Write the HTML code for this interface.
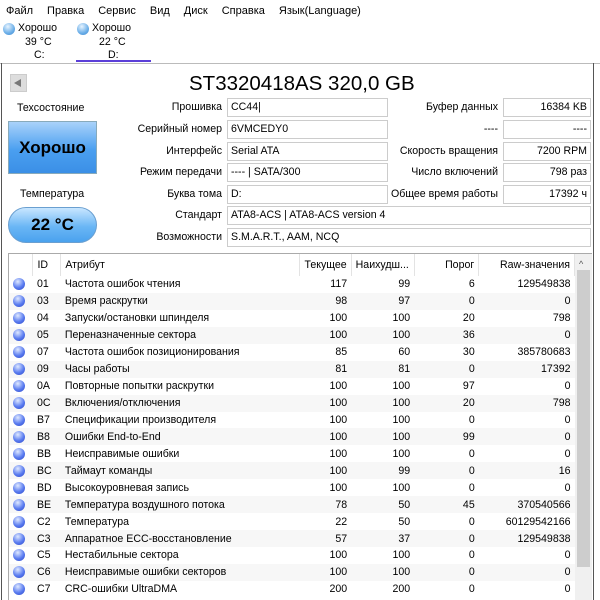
<!DOCTYPE html><html><head><meta charset="utf-8"><style>
*{margin:0;padding:0;box-sizing:border-box}
body{width:600px;height:600px;overflow:hidden;background:#fff;font-family:"Liberation Sans","DejaVu Sans",sans-serif;font-size:10.6px;color:#000;position:relative}
.a{position:absolute;white-space:nowrap}
.menu span{margin-right:14px;font-size:11px}
.lbl{position:absolute;text-align:right;white-space:nowrap}
.f{position:absolute;border:1px solid #ccc;height:19px;line-height:17px;padding:0 3px;background:#fff;white-space:nowrap}
.r{text-align:right}
.dot{position:absolute;width:12px;height:12px;border-radius:50%;background:radial-gradient(circle at 40% 30%,#dfe9ff,#5a7cf0 55%,#2a45c8)}
table{border-collapse:collapse;position:absolute;left:9px;top:254px;width:566px;font-size:10.6px}
td{height:16.95px;padding:0 4px;white-space:nowrap}
tr:nth-child(odd) td{background:#f7f7f7}
tr.h td{height:22px;background:#fff;border-right:1px solid #e3e3e3}
td.n{text-align:right}
</style></head><body>
<div class="a menu" style="left:6px;top:5px"><span>Файл</span><span>Правка</span><span>Сервис</span><span>Вид</span><span>Диск</span><span>Справка</span><span>Язык(Language)</span></div>
<div class="dot" style="left:3px;top:23px;background:radial-gradient(circle at 40% 30%,#e8f4ff,#6aaee8 60%,#3d86cf)"></div>
<div class="a" style="left:18px;top:22px">Хорошо</div>
<div class="a" style="left:25px;top:36px">39 °C</div>
<div class="a" style="left:34px;top:49px">C:</div>
<div class="dot" style="left:77px;top:23px;background:radial-gradient(circle at 40% 30%,#e8f4ff,#6aaee8 60%,#3d86cf)"></div>
<div class="a" style="left:92px;top:22px">Хорошо</div>
<div class="a" style="left:99px;top:36px">22 °C</div>
<div class="a" style="left:108px;top:49px">D:</div>
<div class="a" style="left:76px;top:60px;width:75px;height:2px;background:#5b3fd8"></div>
<div class="a" style="left:0;top:63px;width:600px;height:1px;background:#bbb"></div>
<div class="a" style="left:1px;top:63px;width:1px;height:537px;background:#555"></div>
<div class="a" style="left:593px;top:63px;width:1px;height:537px;background:#555"></div>
<div class="a" style="left:10px;top:74px;width:17px;height:18px;background:#ddd;border:1px solid #ccc"></div>
<div class="a" style="left:14px;top:79px;width:0;height:0;border-right:7px solid #777;border-top:4px solid transparent;border-bottom:4px solid transparent"></div>
<div class="a" style="left:189px;top:72px;font-size:20.5px">ST3320418AS 320,0 GB</div>
<div class="a" style="left:17px;top:102px">Техсостояние</div>
<div class="a" style="left:8px;top:121px;width:89px;height:53px;background:linear-gradient(#a9d2fa,#4a9ff0 55%,#3b8fe6);border:1px solid #8ab;text-align:center;line-height:51px;font-size:17px;font-weight:bold">Хорошо</div>
<div class="a" style="left:20px;top:188px">Температура</div>
<div class="a" style="left:8px;top:207px;width:89px;height:36px;border-radius:18px;background:linear-gradient(#c9e6ff,#6ab6f5 55%,#4aa2ee);border:1px solid #6a9fd0;text-align:center;line-height:34px;font-size:17px;font-weight:bold">22 °C</div>
<div class="lbl" style="right:378px;top:101px">Прошивка</div>
<div class="lbl" style="right:378px;top:123px">Серийный номер</div>
<div class="lbl" style="right:378px;top:145px">Интерфейс</div>
<div class="lbl" style="right:378px;top:166px">Режим передачи</div>
<div class="lbl" style="right:378px;top:188px">Буква тома</div>
<div class="lbl" style="right:378px;top:209px">Стандарт</div>
<div class="lbl" style="right:378px;top:231px">Возможности</div>
<div class="f" style="left:227px;top:98px;width:161px">CC44|</div>
<div class="f" style="left:227px;top:120px;width:161px">6VMCEDY0</div>
<div class="f" style="left:227px;top:142px;width:161px">Serial ATA</div>
<div class="f" style="left:227px;top:163px;width:161px">---- | SATA/300</div>
<div class="f" style="left:227px;top:185px;width:161px">D:</div>
<div class="f" style="left:227px;top:206px;width:364px">ATA8-ACS | ATA8-ACS version 4</div>
<div class="f" style="left:227px;top:228px;width:364px">S.M.A.R.T., AAM, NCQ</div>
<div class="lbl" style="right:102px;top:101px">Буфер данных</div>
<div class="lbl" style="right:102px;top:123px">----</div>
<div class="lbl" style="right:102px;top:145px">Скорость вращения</div>
<div class="lbl" style="right:102px;top:166px">Число включений</div>
<div class="lbl" style="right:102px;top:188px">Общее время работы</div>
<div class="f r" style="left:503px;top:98px;width:88px">16384 KB</div>
<div class="f r" style="left:503px;top:120px;width:88px">----</div>
<div class="f r" style="left:503px;top:142px;width:88px">7200 RPM</div>
<div class="f r" style="left:503px;top:163px;width:88px">798 раз</div>
<div class="f r" style="left:503px;top:185px;width:88px">17392 ч</div>
<div class="a" style="left:8px;top:253px;width:584px;height:347px;border:1px solid #aaa;border-bottom:none"></div>
<div class="a" style="left:575px;top:254px;width:17px;height:346px;background:#f0f0f0"></div>
<div class="a" style="left:579px;top:259px;font-size:9px;color:#555">^</div>
<div class="a" style="left:577px;top:270px;width:13px;height:297px;background:#cdcdcd"></div>
<table>
<colgroup><col style="width:24px"><col style="width:28px"><col style="width:240px"><col style="width:50px"><col style="width:63px"><col style="width:65px"><col style="width:96px"></colgroup>
<tr class="h"><td></td><td>ID</td><td>Атрибут</td><td class="n">Текущее</td><td>Наихудш...</td><td class="n">Порог</td><td class="n">Raw-значения</td></tr>
<tr><td><div class="dot" style="position:relative"></div></td><td>01</td><td>Частота ошибок чтения</td><td class="n">117</td><td class="n">99</td><td class="n">6</td><td class="n">129549838</td></tr>
<tr><td><div class="dot" style="position:relative"></div></td><td>03</td><td>Время раскрутки</td><td class="n">98</td><td class="n">97</td><td class="n">0</td><td class="n">0</td></tr>
<tr><td><div class="dot" style="position:relative"></div></td><td>04</td><td>Запуски/остановки шпинделя</td><td class="n">100</td><td class="n">100</td><td class="n">20</td><td class="n">798</td></tr>
<tr><td><div class="dot" style="position:relative"></div></td><td>05</td><td>Переназначенные сектора</td><td class="n">100</td><td class="n">100</td><td class="n">36</td><td class="n">0</td></tr>
<tr><td><div class="dot" style="position:relative"></div></td><td>07</td><td>Частота ошибок позиционирования</td><td class="n">85</td><td class="n">60</td><td class="n">30</td><td class="n">385780683</td></tr>
<tr><td><div class="dot" style="position:relative"></div></td><td>09</td><td>Часы работы</td><td class="n">81</td><td class="n">81</td><td class="n">0</td><td class="n">17392</td></tr>
<tr><td><div class="dot" style="position:relative"></div></td><td>0A</td><td>Повторные попытки раскрутки</td><td class="n">100</td><td class="n">100</td><td class="n">97</td><td class="n">0</td></tr>
<tr><td><div class="dot" style="position:relative"></div></td><td>0C</td><td>Включения/отключения</td><td class="n">100</td><td class="n">100</td><td class="n">20</td><td class="n">798</td></tr>
<tr><td><div class="dot" style="position:relative"></div></td><td>B7</td><td>Спецификации производителя</td><td class="n">100</td><td class="n">100</td><td class="n">0</td><td class="n">0</td></tr>
<tr><td><div class="dot" style="position:relative"></div></td><td>B8</td><td>Ошибки End-to-End</td><td class="n">100</td><td class="n">100</td><td class="n">99</td><td class="n">0</td></tr>
<tr><td><div class="dot" style="position:relative"></div></td><td>BB</td><td>Неисправимые ошибки</td><td class="n">100</td><td class="n">100</td><td class="n">0</td><td class="n">0</td></tr>
<tr><td><div class="dot" style="position:relative"></div></td><td>BC</td><td>Таймаут команды</td><td class="n">100</td><td class="n">99</td><td class="n">0</td><td class="n">16</td></tr>
<tr><td><div class="dot" style="position:relative"></div></td><td>BD</td><td>Высокоуровневая запись</td><td class="n">100</td><td class="n">100</td><td class="n">0</td><td class="n">0</td></tr>
<tr><td><div class="dot" style="position:relative"></div></td><td>BE</td><td>Температура воздушного потока</td><td class="n">78</td><td class="n">50</td><td class="n">45</td><td class="n">370540566</td></tr>
<tr><td><div class="dot" style="position:relative"></div></td><td>C2</td><td>Температура</td><td class="n">22</td><td class="n">50</td><td class="n">0</td><td class="n">60129542166</td></tr>
<tr><td><div class="dot" style="position:relative"></div></td><td>C3</td><td>Аппаратное ECC-восстановление</td><td class="n">57</td><td class="n">37</td><td class="n">0</td><td class="n">129549838</td></tr>
<tr><td><div class="dot" style="position:relative"></div></td><td>C5</td><td>Нестабильные сектора</td><td class="n">100</td><td class="n">100</td><td class="n">0</td><td class="n">0</td></tr>
<tr><td><div class="dot" style="position:relative"></div></td><td>C6</td><td>Неисправимые ошибки секторов</td><td class="n">100</td><td class="n">100</td><td class="n">0</td><td class="n">0</td></tr>
<tr><td><div class="dot" style="position:relative"></div></td><td>C7</td><td>CRC-ошибки UltraDMA</td><td class="n">200</td><td class="n">200</td><td class="n">0</td><td class="n">0</td></tr>
</table>
</body></html>
